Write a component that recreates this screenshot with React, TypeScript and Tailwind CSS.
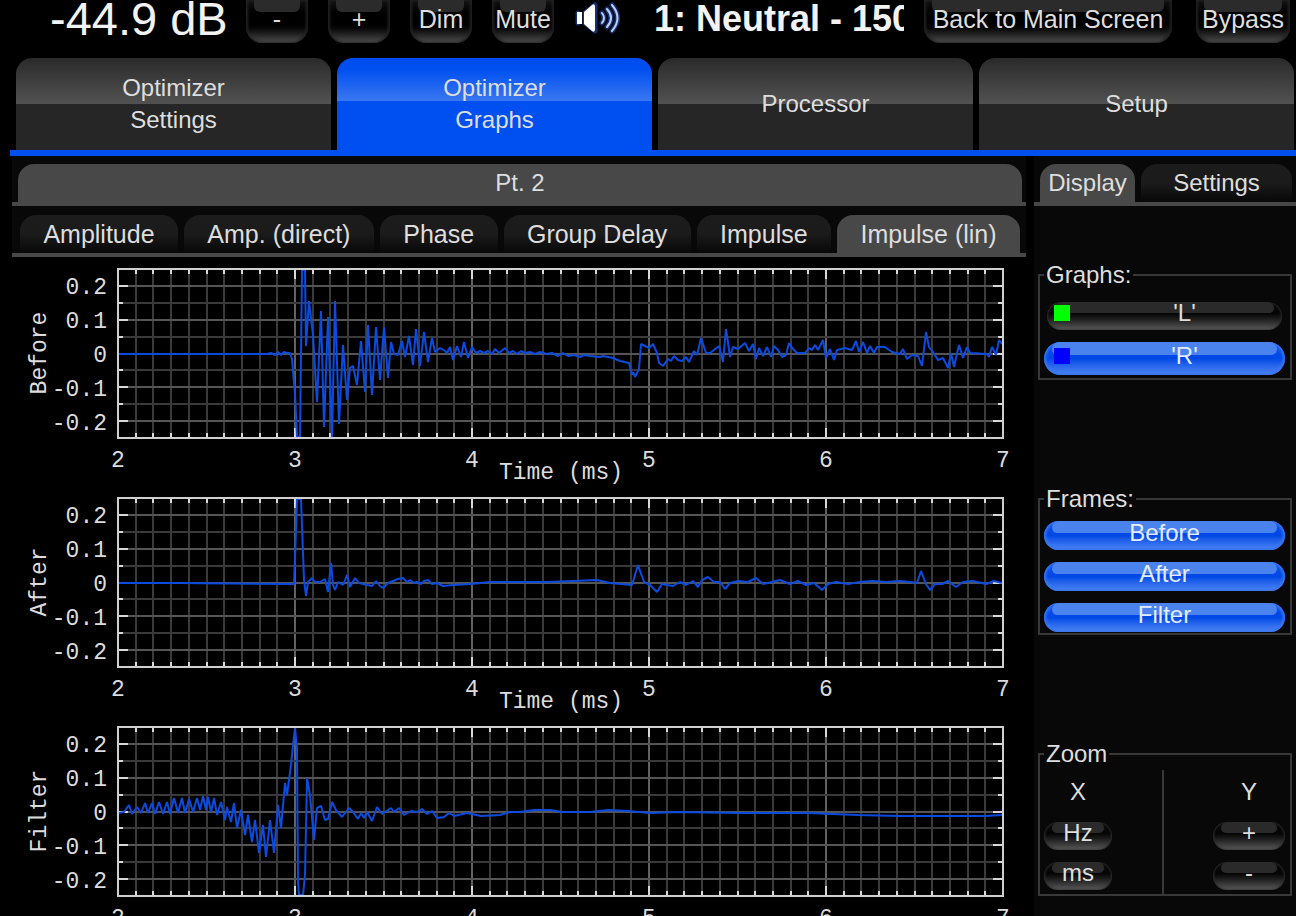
import { useState } from "react";
import type { ReactNode } from "react";
import clsx from "clsx";

// Traces are in plot pixels: x 0..885 is 2..7 ms, y 0..169 is 0.25..-0.25
const BEFORE =
  "0,85 149,85 153,84 157,86 160,83 163,86 166,83 169,84 172,84 174,90 177,125 179,168 182,168 184,1 187,1 188,77 191,32 195,66 199,133 203,42 206,158 210,48 214,168 217,32 221,155 225,76 229,131 232,99 235,97 239,116 243,72 247,123 250,56 254,126 258,58 262,111 266,58 270,109 273,73 276,85 280,86 284,72 287,88 291,67 295,96 298,60 302,97 306,63 310,93 314,69 317,83 322,79 327,82 329,84 332,78 335,91 339,77 343,88 346,73 350,89 354,78 358,84 362,82 366,84 370,82 374,85 377,80 381,84 387,79 391,84 395,82 399,85 403,82 407,84 412,83 417,85 422,83 428,85 434,84 440,87 445,84 450,87 456,86 462,88 466,86 472,87 482,88 485,87 495,89 502,92 511,94 514,106 515,103 517,108 521,100 523,75 527,77 531,79 535,75 539,84 541,94 545,97 550,90 553,92 556,87 560,91 564,92 568,88 571,93 576,82 579,86 583,69 588,84 592,84 601,77 605,93 608,60 612,88 615,78 620,80 627,74 631,82 635,75 638,90 641,79 645,87 649,78 653,88 656,77 660,81 664,88 668,86 671,74 675,80 679,84 687,84 691,79 694,81 697,76 700,81 705,71 708,89 712,80 716,91 719,81 727,79 734,81 738,72 741,83 745,73 749,84 752,77 756,84 759,78 767,78 774,83 782,85 785,80 789,90 794,86 800,87 804,97 808,63 811,78 815,83 820,91 825,89 830,99 833,84 836,98 841,76 845,89 849,78 852,84 869,85 871,88 874,78 878,86 881,71 884,75";
const AFTER =
  "0,85 60,85 176,86 177,60 179,1 183,1 185,55 186,82 188,98 190,84 194,80 197,84 202,84 207,81 210,94 213,65 215,87 217,92 220,84 225,87 229,77 232,89 237,80 241,85 249,87 254,88 258,83 262,88 265,90 270,85 280,81 285,80 289,84 292,82 296,85 299,84 303,86 306,83 310,82 314,86 319,85 325,88 335,87 352,86 372,84 430,84 479,82 492,85 514,87 520,67 526,84 532,87 539,94 544,86 549,87 555,88 562,84 568,87 575,83 580,89 584,82 590,79 596,84 602,84 607,91 612,85 620,83 630,84 638,80 645,86 654,84 662,82 672,86 680,83 688,87 696,85 704,92 710,86 718,84 730,86 742,84 755,83 768,84 782,83 792,84 799,85 803,73 808,86 812,92 817,86 824,86 830,83 838,89 845,84 855,83 868,86 876,83 884,85";
const FILTER =
  "0,86 6,85 11,78 14,87 19,80 23,86 27,76 30,86 34,76 37,87 41,75 45,87 49,75 52,87 56,71 60,86 64,71 67,86 71,72 75,85 79,71 82,83 85,69 88,83 90,70 93,85 96,71 99,88 103,75 107,93 109,80 113,95 116,76 119,101 123,83 127,108 130,88 134,115 137,93 141,126 145,98 148,130 152,93 156,126 160,78 163,101 167,56 169,68 173,38 175,18 177,1 179,21 180,155 181,168 185,168 187,148 189,51 192,68 196,113 199,81 203,79 207,93 210,92 214,75 218,83 224,90 231,81 235,85 240,92 243,86 246,91 249,85 254,94 259,80 264,87 273,81 276,85 281,81 286,88 293,84 299,85 304,82 309,87 314,84 319,91 326,90 331,86 336,89 349,86 363,89 382,88 392,85 402,85 416,83 432,83 444,85 472,85 490,83 510,84 532,86 560,85 620,86 690,86 740,88 782,89 830,89 867,89 884,88";

const LEFT = 106;
const TOP = 12;
const WIDTH = 885;
const HEIGHT = 169;
const Y_LABELS = ["0.2", "0.1", "0", "-0.1", "-0.2"];
const X_LABELS = ["2", "3", "4", "5", "6", "7"];

function Plot({ name, points }: { name: string; points: string }) {
  const cols = Array.from({ length: 49 }, (_, i) => i + 1);
  const rows = Array.from({ length: 9 }, (_, i) => i - 4);
  const mid = TOP + HEIGHT / 2;

  return (
    <svg
      viewBox="0 0 1014 229"
      className="block w-full font-['Liberation_Mono',monospace] text-[23px]"
      role="img"
      aria-label={name + " impulse response"}
    >
      {cols.map((i) => {
        const x = Math.round(LEFT + (i * WIDTH) / 50);
        const tick = i % 10 === 0 ? 10 : 5;
        return (
          <g key={i}>
            <path d={`M${x} ${TOP}v${HEIGHT}`} stroke={i % 10 === 0 ? "#626262" : "#3a3a3a"} strokeWidth={2} />
            <path d={`M${x} ${TOP}v${tick}M${x} ${TOP + HEIGHT}v${-tick}`} stroke="#d8d8d8" strokeWidth={2} />
          </g>
        );
      })}
      {rows.map((i) => {
        const y = Math.round(mid + i * 16.9);
        const tick = i % 2 === 0 ? 10 : 5;
        return (
          <g key={i}>
            <path d={`M${LEFT} ${y}h${WIDTH}`} stroke={i % 2 === 0 ? "#555" : "#3a3a3a"} strokeWidth={2} />
            <path d={`M${LEFT} ${y}h${tick}M${LEFT + WIDTH} ${y}h${-tick}`} stroke="#d8d8d8" strokeWidth={2} />
          </g>
        );
      })}
      <polyline
        points={points}
        transform={`translate(${LEFT} ${TOP})`}
        fill="none"
        stroke="#0b4be0"
        strokeWidth={2}
        strokeLinejoin="bevel"
      />
      <rect x={LEFT} y={TOP} width={WIDTH} height={HEIGHT} fill="none" stroke="#cfcfcf" strokeWidth={2} />

      <g fill="#dcdcdc">
        {Y_LABELS.map((label, i) => (
          <text key={label} x={95} y={37 + i * 34} textAnchor="end">
            {label}
          </text>
        ))}
        {X_LABELS.map((label, i) => (
          <text key={label} x={LEFT + i * 177} y={210} textAnchor="middle">
            {label}
          </text>
        ))}
        <text x={549} y={222} textAnchor="middle">
          Time (ms)
        </text>
        <text transform="translate(34 96) rotate(-90)" textAnchor="middle">
          {name}
        </text>
      </g>
    </svg>
  );
}

function Speaker() {
  return (
    <svg viewBox="0 0 48 36" className="h-9 w-12 shrink-0" role="img" aria-label="Sound on">
      <g fill="none" stroke="#2458cc" strokeOpacity={0.55} strokeLinecap="round" strokeLinejoin="round" strokeWidth={5}>
        <path d="M28 13q4 5 0 10M33 9q8 9 0 18M38 5q11 13 0 26" />
        <path d="M4 13v10M11 13L21 5v26L11 23z" />
      </g>
      <path d="M3 12h5v12H3zM10 12L18 5q3-2 3 2v22q0 4-3 2l-8-7z" fill="#fff" />
      <g fill="none" stroke="#b9cdf5" strokeLinecap="round" strokeWidth={2}>
        <path d="M28 13q4 5 0 10M33 9q8 9 0 18M38 5q11 13 0 26" />
      </g>
    </svg>
  );
}

function TopButton({ className, children }: { className: string; children: ReactNode }) {
  return (
    <button
      type="button"
      className={clsx(
        "relative h-[43px] shrink-0 whitespace-nowrap rounded-b-2xl bg-linear-to-b from-[#161616] via-black via-50% to-[#505050] text-center text-[25px] leading-[38px] shadow-[inset_2px_0_3px_#222,inset_-2px_0_3px_#222]",
        className,
      )}
    >
      <span className="absolute inset-x-2 top-0 h-3 rounded-b-md bg-[#2b2b2b]" />
      <span className="relative flex h-[43px] justify-center">{children}</span>
    </button>
  );
}

interface PillProps {
  active?: boolean;
  swatch?: string;
  className?: string;
  onClick?: () => void;
  children: ReactNode;
}

function Pill({ active, swatch, className, onClick, children }: PillProps) {
  return (
    <button
      type="button"
      aria-pressed={active}
      onClick={onClick}
      className={clsx(
        "relative flex items-center justify-center rounded-full pb-1.5 text-2xl leading-6",
        active
          ? "bg-linear-to-b from-[#0a50e8] via-[#0048e6] via-50% to-[#4d86f2] text-[#e4ecff] shadow-[inset_0_0_3px_2px_#3a76ee]"
          : "bg-linear-to-b from-[#101010] via-[#050505] via-40% to-[#5a5a5a] shadow-[inset_1px_0_2px_#2c2c2c,inset_-1px_0_2px_#2c2c2c]",
        swatch && "pl-10",
        className,
      )}
    >
      <span
        className={clsx(
          "absolute inset-x-2 top-0 h-2/5 rounded-t-lg rounded-b-md",
          active ? "bg-[#4a82ee]" : "bg-[#2a2a2a]",
        )}
      />
      {swatch && <span className={clsx("absolute size-4", swatch, active ? "left-2.5" : "left-[7px]")} />}
      <span className="relative">{children}</span>
    </button>
  );
}

function Group({ title, className, children }: { title: string; className?: string; children: ReactNode }) {
  return (
    <fieldset className="min-w-0 border-2 border-[#383838] pr-[5px] pl-1">
      <legend className="px-0.5 text-2xl leading-8">{title}</legend>
      <div className={className}>{children}</div>
    </fieldset>
  );
}

const MAIN_TABS = [["Optimizer", "Settings"], ["Optimizer", "Graphs"], ["Processor"], ["Setup"]];
const GRAPH_TABS = ["Amplitude", "Amp. (direct)", "Phase", "Group Delay", "Impulse", "Impulse (lin)"];

function App() {
  const [mainTab, setMainTab] = useState(1);
  const [graphTab, setGraphTab] = useState("Impulse (lin)");
  const [sideTab, setSideTab] = useState("Display");
  const [left, setLeft] = useState(false);
  const [right, setRight] = useState(true);
  const [frames, setFrames] = useState({ Before: true, After: true, Filter: true });

  const tabStyle = (active: boolean) =>
    active ? "bg-[#484848]" : "bg-linear-to-b from-[#1c1c1c] via-[#1b1b1b] to-[#080808]";

  return (
    <div className="flex h-screen flex-col overflow-hidden bg-black font-['Liberation_Sans',Arial,sans-serif] text-[#dedede]">
      <header className="flex h-[58px] shrink-0 items-start gap-5 pr-1.5">
        <output className="w-[226px] shrink-0 whitespace-nowrap pl-[50px] text-[47px] leading-[38px] text-[#f2f2f2]">
          -44.9 dB
        </output>
        <TopButton className="w-[62px]">-</TopButton>
        <TopButton className="w-[62px]">+</TopButton>
        <TopButton className="w-[62px]">Dim</TopButton>
        <TopButton className="w-[62px]">Mute</TopButton>
        <Speaker />
        <h1 className="ml-3 min-w-0 flex-1 overflow-hidden whitespace-nowrap text-4xl leading-[38px] font-bold text-[#f2f2f2]">
          1: Neutral - 150
        </h1>
        <div className="flex gap-6">
          <TopButton className="w-[248px]">Back to Main Screen</TopButton>
          <TopButton className="w-[94px]">Bypass</TopButton>
        </div>
      </header>

      <nav className="grid shrink-0 grid-cols-4 gap-1.5 pr-0.5 pl-4" role="tablist">
        {MAIN_TABS.map((lines, i) => (
          <button
            key={lines.join(" ")}
            type="button"
            role="tab"
            aria-selected={i === mainTab}
            onClick={() => setMainTab(i)}
            className={clsx(
              "flex h-[92px] flex-col items-center justify-center rounded-t-2xl text-2xl leading-8",
              i === mainTab
                ? "bg-[linear-gradient(#004cf0_0%,#004ff0_12%,#3b78f0_47%,#004ff0_47%)]"
                : "bg-[linear-gradient(#2a2a2a_0%,#525252_50%,#262626_50%)]",
            )}
          >
            {lines.map((line) => (
              <span key={line}>{line}</span>
            ))}
          </button>
        ))}
      </nav>
      <div className="ml-2.5 h-1.5 shrink-0 bg-[#004ff0]" />

      <main className="flex min-h-0 flex-1 gap-2 pl-3">
        <section className="min-w-0 flex-1 bg-black">
          <div className="border-b-4 border-[#484848] bg-[#080808] pt-2 pr-1 pl-1.5" role="tablist">
            <button
              type="button"
              role="tab"
              aria-selected={true}
              className="block h-[38px] w-full rounded-t-2xl bg-[#484848] text-2xl leading-[38px]"
            >
              Pt. 2
            </button>
          </div>
          <div className="flex gap-1.5 border-b-4 border-[#484848] bg-[#080808] pt-[9px] pr-1.5 pl-2" role="tablist">
            {GRAPH_TABS.map((tab) => (
              <button
                key={tab}
                type="button"
                role="tab"
                aria-selected={tab === graphTab}
                onClick={() => setGraphTab(tab)}
                className={clsx(
                  "h-[38px] grow whitespace-nowrap rounded-t-2xl text-[25px] leading-[38px]",
                  tabStyle(tab === graphTab),
                )}
              >
                <span className="px-[23px]">{tab}</span>
              </button>
            ))}
          </div>
          {frames.Before && <Plot name="Before" points={BEFORE} />}
          {frames.After && <Plot name="After" points={AFTER} />}
          {frames.Filter && <Plot name="Filter" points={FILTER} />}
        </section>

        <aside className="w-[262px] shrink-0 bg-[#080808]">
          <div className="flex gap-1.5 border-b-4 border-[#484848] pt-2 pr-1 pl-1.5" role="tablist">
            {["Display", "Settings"].map((tab) => (
              <button
                key={tab}
                type="button"
                role="tab"
                aria-selected={tab === sideTab}
                onClick={() => setSideTab(tab)}
                className={clsx(
                  "h-[38px] rounded-t-2xl text-2xl leading-[38px] first:w-[95px] last:flex-1",
                  tabStyle(tab === sideTab),
                )}
              >
                {tab}
              </button>
            ))}
          </div>

          <div className="flex flex-col gap-[103px] pt-[53px] pr-1 pl-1">
            <Group title="Graphs:" className="flex flex-col gap-3 pt-[11px] pb-[3px]">
              <Pill className="mx-[3px] h-7" active={left} swatch="bg-[#00ff00]" onClick={() => setLeft(!left)}>
                'L'
              </Pill>
              <Pill className="h-[33px]" active={right} swatch="bg-[#0000ff]" onClick={() => setRight(!right)}>
                'R'
              </Pill>
            </Group>

            <Group title="Frames:" className="flex flex-col gap-3 pt-1.5 pb-[1px]">
              {(["Before", "After", "Filter"] as const).map((name) => (
                <Pill
                  key={name}
                  className="h-[29px]"
                  active={frames[name]}
                  onClick={() => setFrames({ ...frames, [name]: !frames[name] })}
                >
                  {name}
                </Pill>
              ))}
            </Group>

            <Group title="Zoom" className="flex justify-between">
              <div className="flex w-[68px] flex-col gap-3 pt-1 pb-1">
                <span className="text-center text-2xl leading-9">X</span>
                <Pill className="h-7">Hz</Pill>
                <Pill className="h-7">ms</Pill>
              </div>
              <div className="w-0.5 bg-[#383838]" />
              <div className="flex w-[72px] flex-col gap-3 pt-1 pb-1">
                <span className="text-center text-2xl leading-9">Y</span>
                <Pill className="h-7">+</Pill>
                <Pill className="h-7">-</Pill>
              </div>
            </Group>
          </div>
        </aside>
      </main>
    </div>
  );
}

export default App;
